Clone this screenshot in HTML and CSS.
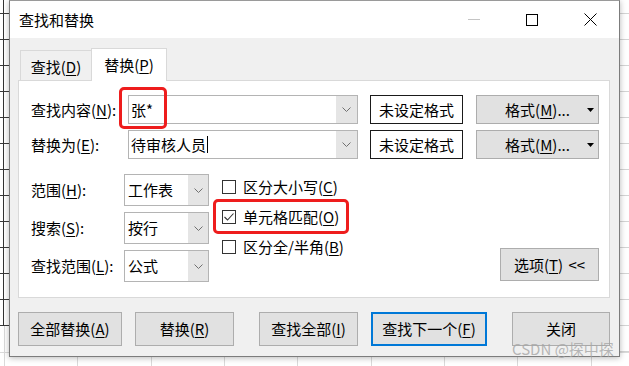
FILE: index.html
```html
<!DOCTYPE html>
<html lang="zh-CN">
<head>
<meta charset="utf-8">
<title>查找和替换</title>
<link rel="stylesheet" href="styles.css">
</head>
<body>
<div class="window">
  <div class="titlebar">
    <span class="title">查找和替换</span>
    <div class="controls">
      <div class="cbtn"><svg width="12" height="12" viewBox="0 0 12 12"><line x1="0" y1="5.5" x2="12" y2="5.5" stroke="#c4c4c4" stroke-width="1"/></svg></div>
      <div class="cbtn"><svg width="12" height="12" viewBox="0 0 12 12"><rect x="0.5" y="0.5" width="11" height="11" fill="none" stroke="#000" stroke-width="1"/></svg></div>
      <div class="cbtn"><svg width="13" height="13" viewBox="0 0 13 13"><path d="M0.5 0.5 L12.5 12.5 M12.5 0.5 L0.5 12.5" stroke="#000" stroke-width="1" fill="none"/></svg></div>
    </div>
  </div>
  <div class="client">
    <div class="tabs">
      <div class="tab">查找(<u>D</u>)</div>
      <div class="tab active">替换(<u>P</u>)</div>
    </div>
    <div class="panel">
      <div class="row">
        <span class="lbl">查找内容(<u>N</u>):</span>
        <div class="combo"><span class="val">张*</span><span class="dd"><svg width="9" height="5" viewBox="0 0 9 5"><polyline points="0.5,0.5 4.5,4.5 8.5,0.5" fill="none" stroke="#707070" stroke-width="1"/></svg></span></div>
        <div class="fmtbox">未设定格式</div>
        <div class="btn fmtbtn">格式(<u>M</u>)...<svg class="tri" width="7" height="4" viewBox="0 0 7 4"><polygon points="0,0 7,0 3.5,4" fill="#000"/></svg></div>
      </div>
      <div class="row">
        <span class="lbl">替换为(<u>E</u>):</span>
        <div class="combo"><span class="val">待审核人员<span class="caret"></span></span><span class="dd"><svg width="9" height="5" viewBox="0 0 9 5"><polyline points="0.5,0.5 4.5,4.5 8.5,0.5" fill="none" stroke="#707070" stroke-width="1"/></svg></span></div>
        <div class="fmtbox">未设定格式</div>
        <div class="btn fmtbtn">格式(<u>M</u>)...<svg class="tri" width="7" height="4" viewBox="0 0 7 4"><polygon points="0,0 7,0 3.5,4" fill="#000"/></svg></div>
      </div>
      <div class="opts">
        <div class="selects">
          <div class="srow"><span class="slbl">范围(<u>H</u>):</span><div class="select"><span class="val">工作表</span><span class="dd"><svg width="9" height="5" viewBox="0 0 9 5"><polyline points="0.5,0.5 4.5,4.5 8.5,0.5" fill="none" stroke="#707070" stroke-width="1"/></svg></span></div></div>
          <div class="srow"><span class="slbl">搜索(<u>S</u>):</span><div class="select"><span class="val">按行</span><span class="dd"><svg width="9" height="5" viewBox="0 0 9 5"><polyline points="0.5,0.5 4.5,4.5 8.5,0.5" fill="none" stroke="#707070" stroke-width="1"/></svg></span></div></div>
          <div class="srow"><span class="slbl">查找范围(<u>L</u>):</span><div class="select"><span class="val">公式</span><span class="dd"><svg width="9" height="5" viewBox="0 0 9 5"><polyline points="0.5,0.5 4.5,4.5 8.5,0.5" fill="none" stroke="#707070" stroke-width="1"/></svg></span></div></div>
        </div>
        <div class="checks">
          <div class="chk"><span class="box"></span>区分大小写(<u>C</u>)</div>
          <div class="chk"><span class="box"><svg width="12" height="12" viewBox="0 0 12 12"><polyline points="1.5,6 4.5,9 10.5,2.5" fill="none" stroke="#333" stroke-width="1.1"/></svg></span>单元格匹配(<u>O</u>)</div>
          <div class="chk"><span class="box"></span>区分全/半角(<u>B</u>)</div>
        </div>
        <div class="btn optbtn">选项(<u>T</u>) &lt;&lt;</div>
      </div>
      <div class="mark m1"></div>
      <div class="mark m2"></div>
    </div>
    <div class="actions">
      <div class="btn b1">全部替换(<u>A</u>)</div>
      <div class="btn b2">替换(<u>R</u>)</div>
      <div class="btn b3">查找全部(<u>I</u>)</div>
      <div class="btn b4 focus">查找下一个(<u>F</u>)</div>
      <div class="btn b5">关闭</div>
    </div>
  </div>
  <div class="watermark">CSDN @探中探</div>
</div>
</body>
</html>
```
FILE: styles.css
```css
html, body {
  margin: 0;
  padding: 0;
}
body {
  width: 629px;
  height: 366px;
  overflow: hidden;
  background-color: #fff;
  background-image:
    linear-gradient(#333, #333),
    repeating-linear-gradient(to bottom, transparent 0 13px, #3a3a3a 13px 14px, transparent 14px 26px),
    repeating-linear-gradient(to bottom, transparent 0 13px, #d4d4d4 13px 14px, transparent 14px 26px),
    repeating-linear-gradient(to right, transparent 0 4px, #dadada 4px 5px, transparent 5px 73.33px),
    linear-gradient(#dadada, #dadada);
  background-size: 1px 326px, 9px 327px, 9px 366px, 629px 40px, 629px 1px;
  background-position: 3px 0, 0 0, 620px 0, 0 326px, 0 352px;
  background-repeat: no-repeat;
  font-family: "Noto Sans CJK SC", "Microsoft YaHei", sans-serif;
}
u {
  text-decoration: underline;
  text-underline-offset: 2px;
  text-decoration-thickness: 1px;
}
.window {
  position: relative;
  margin-left: 9px;
  width: 611px;
  height: 357px;
  box-sizing: border-box;
  border: 1px solid #7c7c7c;
  border-top-color: #9a9a9a;
  background: #f0f0f0;
  display: flex;
  flex-direction: column;
  box-shadow: 0 1px 6px rgba(0, 0, 0, 0.28);
  font-size: 15px;
  line-height: 20px;
  color: #000;
}
.titlebar {
  height: 37px;
  background: #fff;
  display: flex;
  align-items: center;
  padding-left: 9px;
}
.title {
  margin-top: 1px;
}
.controls {
  margin-left: auto;
  display: flex;
  height: 37px;
}
.cbtn {
  width: 58px;
  display: flex;
  align-items: center;
  justify-content: center;
}
.cbtn svg {
  display: block;
}
.client {
  flex: 1;
  padding: 10px 9px 0 8px;
}
.tabs {
  display: flex;
  align-items: flex-end;
  height: 32px;
  padding-left: 2px;
  position: relative;
  z-index: 1;
}
.tab {
  box-sizing: border-box;
  width: 71px;
  height: 30px;
  border: 1px solid #d9d9d9;
  border-bottom: none;
  border-right: none;
  display: flex;
  align-items: center;
  justify-content: center;
  padding-top: 2px;
}
.tab.active {
  width: 76px;
  height: 33px;
  margin-bottom: -1px;
  background: #fff;
  border-right: 1px solid #d9d9d9;
  padding-top: 0;
}
.panel {
  position: relative;
  box-sizing: border-box;
  height: 218px;
  border: 1px solid #d9d9d9;
  background: #fff;
  padding: 14px 10px 0 12px;
}
.row {
  display: flex;
  align-items: center;
  height: 29px;
}
.row + .row {
  margin-top: 6px;
}
.lbl {
  width: 97px;
}
.combo, .select {
  box-sizing: border-box;
  display: flex;
  border: 1px solid #b4b4b4;
  background: #fff;
}
.combo {
  width: 230px;
  height: 29px;
}
.select {
  width: 85px;
  height: 32px;
}
.val {
  flex: 1;
  display: flex;
  align-items: center;
  padding-left: 2px;
}
.select .val {
  padding-left: 3px;
}
.caret {
  display: inline-block;
  width: 1px;
  height: 17px;
  background: #000;
  margin-left: 1px;
}
.dd {
  width: 21px;
  background: #e5e5e5;
  display: flex;
  align-items: center;
  justify-content: center;
}
.select .dd {
  width: 20px;
}
.dd svg {
  display: block;
}
.fmtbox {
  box-sizing: border-box;
  margin-left: 12px;
  width: 93px;
  height: 29px;
  border: 1px solid #1a1a1a;
  display: flex;
  align-items: center;
  justify-content: center;
}
.btn {
  box-sizing: border-box;
  background: #e1e1e1;
  border: 1px solid #adadad;
  display: flex;
  align-items: center;
  justify-content: center;
}
.fmtbtn {
  position: relative;
  margin-left: 13px;
  width: 123px;
  height: 29px;
}
.tri {
  position: absolute;
  right: 4px;
  top: 12px;
}
.opts {
  display: flex;
  margin-top: 15px;
}
.selects {
  display: flex;
  flex-direction: column;
  gap: 6px;
}
.srow {
  display: flex;
  align-items: center;
  height: 32px;
}
.slbl {
  width: 93px;
}
.checks {
  display: flex;
  flex-direction: column;
  margin-left: 13px;
  margin-top: -2px;
}
.chk {
  display: flex;
  align-items: center;
  height: 30px;
}
.box {
  box-sizing: border-box;
  width: 14px;
  height: 14px;
  border: 1px solid #333;
  margin-right: 7px;
  background: #fff;
  display: flex;
  align-items: center;
  justify-content: center;
}
.box svg {
  display: block;
}
.optbtn {
  margin-left: auto;
  margin-top: 74px;
  width: 99px;
  height: 33px;
  word-spacing: 2px;
}
.mark {
  position: absolute;
  box-sizing: border-box;
  border: 3px solid #ee1d1d;
  border-radius: 5px;
}
.m1 {
  left: 100px;
  top: 6px;
  width: 48px;
  height: 42px;
}
.m2 {
  left: 194px;
  top: 118px;
  width: 136px;
  height: 35px;
}
.actions {
  display: flex;
  margin-top: 14px;
}
.actions .btn {
  height: 34px;
}
.b1 { width: 104px; }
.b2 { width: 99px; margin-left: 13px; }
.b3 { width: 99px; margin-left: 25px; }
.b4 { width: 116px; margin-left: 13px; }
.b5 { width: 98px; margin-left: 25px; }
.btn.focus {
  border: 2px solid #0078d7;
}
.watermark {
  position: absolute;
  left: 502px;
  top: 339px;
  font-size: 15px;
  line-height: 18px;
  color: rgba(165, 165, 165, 0.8);
  white-space: nowrap;
}
```
